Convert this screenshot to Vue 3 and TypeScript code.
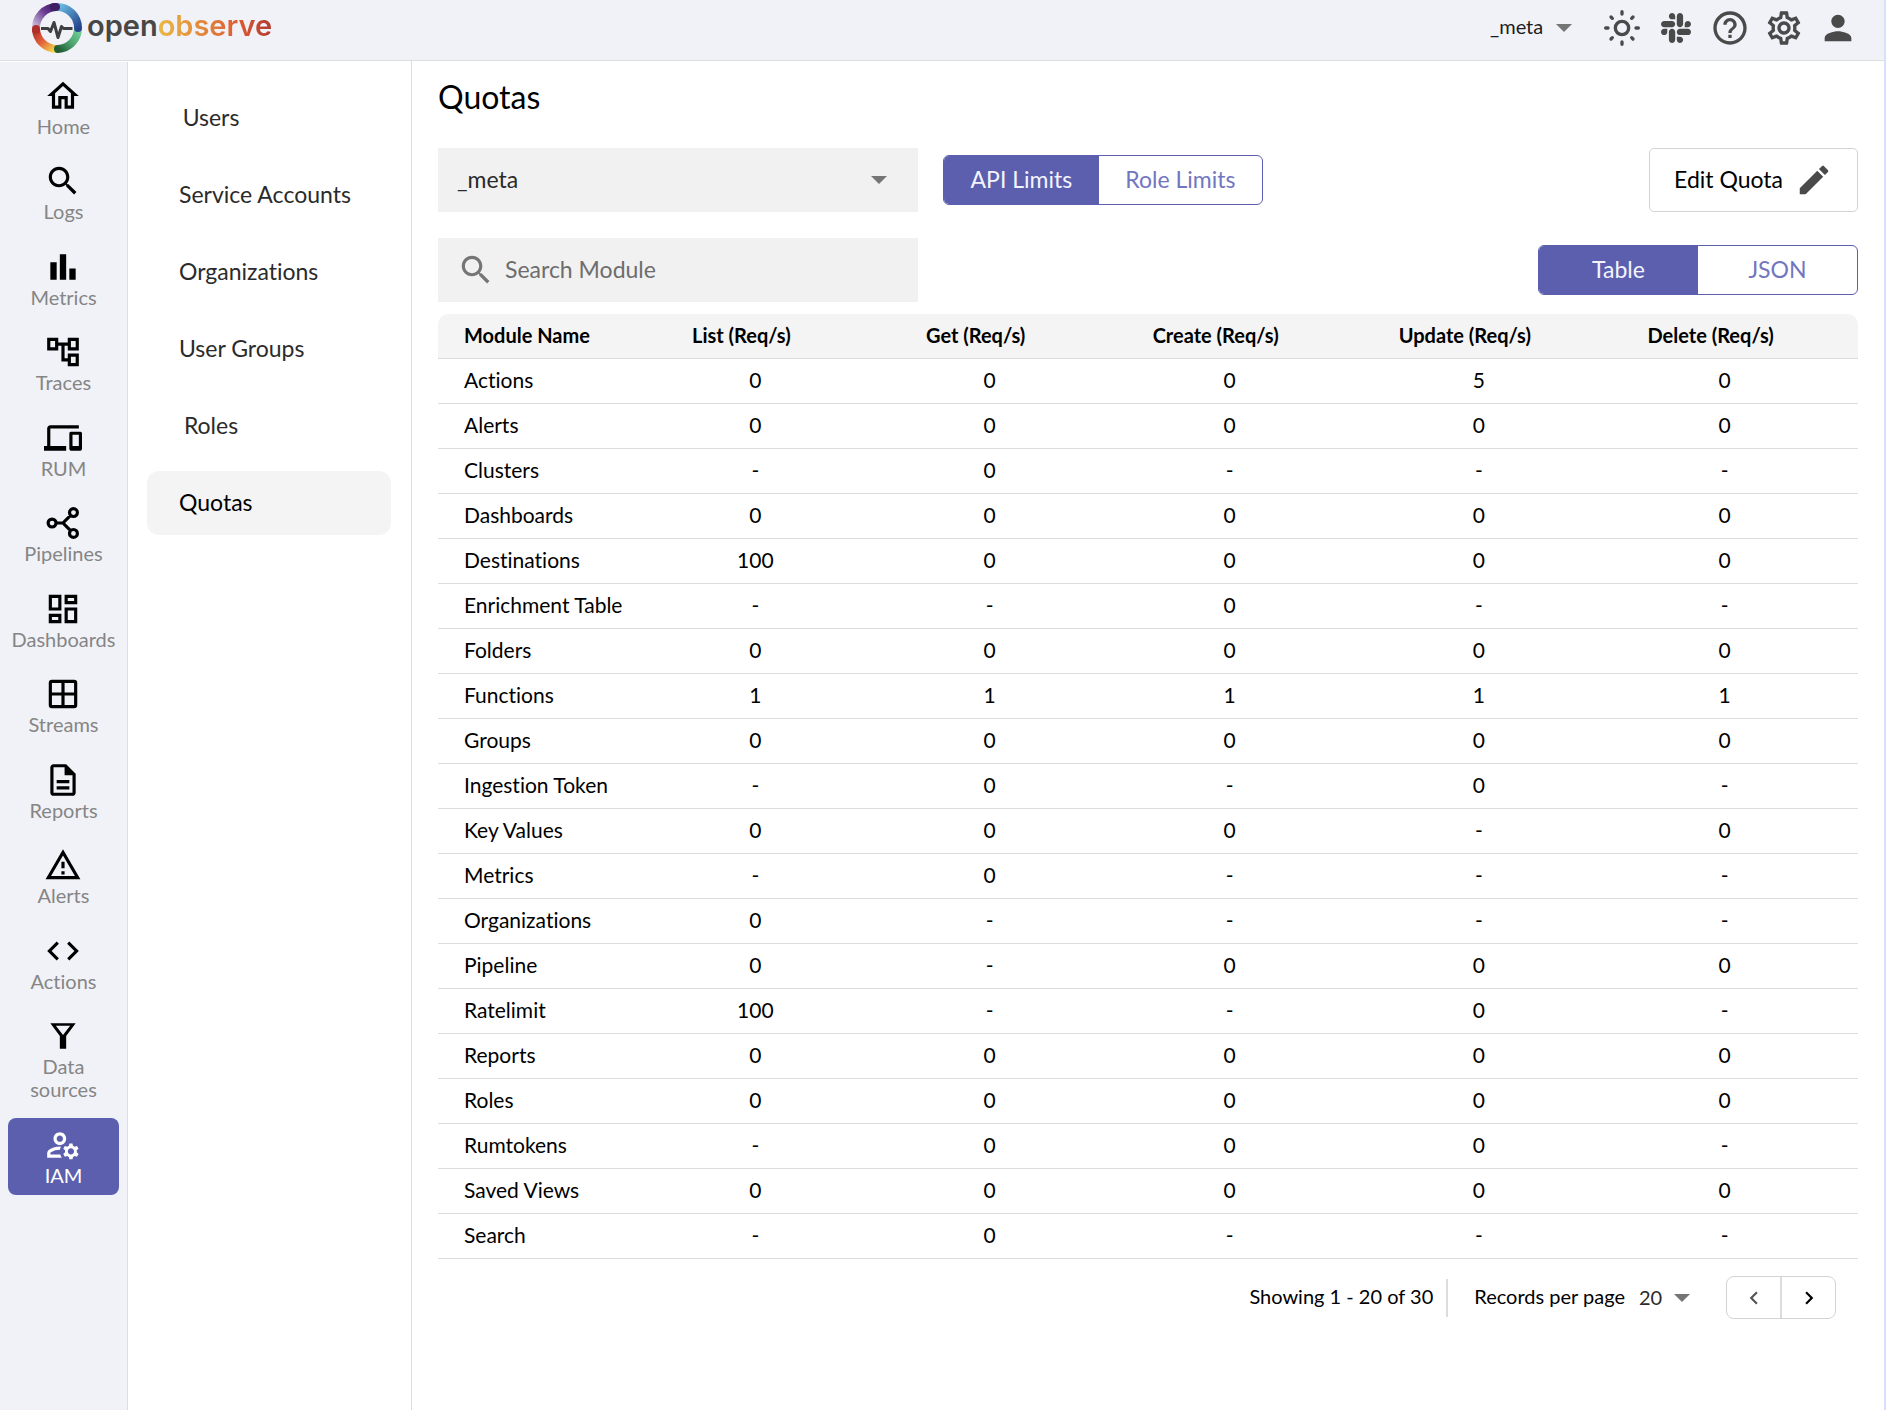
<script setup lang="ts">
import { ref } from 'vue'

interface RailItem {
  label: string
  paths: string
  stroked?: boolean
}

const rail: RailItem[] = [
  { label: 'Home', paths: 'M12 5.69l5 4.5V18h-2v-6H9v6H7v-7.81l5-4.5M12 3L2 12h3v8h6v-6h2v6h6v-8h3L12 3z' },
  { label: 'Logs', paths: 'M15.5 14h-.79l-.28-.27C15.41 12.59 16 11.11 16 9.5 16 5.91 13.09 3 9.5 3S3 5.91 3 9.5 5.91 16 9.5 16c1.61 0 3.09-.59 4.23-1.57l.27.28v.79l5 4.99L20.49 19l-4.99-5zm-6 0C7.01 14 5 11.99 5 9.5S7.01 5 9.5 5 14 7.01 14 9.5 11.99 14 9.5 14z' },
  { label: 'Metrics', paths: 'M4 9h4v11H4zm12 4h4v7h-4zm-6-9h4v16h-4z' },
  { label: 'Traces', paths: 'M22 11V3h-7v3H9V3H2v8h7V8h2v10h4v3h7v-8h-7v3h-2V8h2v3h7zM7 9H4V5h3v4zm10 6h3v4h-3v-4zm0-10h3v4h-3V5z' },
  { label: 'RUM', paths: 'M4 6h18V4H4c-1.1 0-2 .9-2 2v11H0v3h14v-3H4V6zm19 2h-6c-.55 0-1 .45-1 1v10c0 .55.45 1 1 1h6c.55 0 1-.45 1-1V9c0-.55-.45-1-1-1zm-1 9h-4v-7h4v7z' },
  { label: 'Pipelines', stroked: true, paths: 'M7.6 12a2.5 2.5 0 1 1-5 0a2.5 2.5 0 1 1 5 0M21.1 5.4a2.5 2.5 0 1 1-5 0a2.5 2.5 0 1 1 5 0M21.1 18.6a2.5 2.5 0 1 1-5 0a2.5 2.5 0 1 1 5 0M8 12h4M16.8 7.2L12 12l4.8 4.8' },
  { label: 'Dashboards', paths: 'M19 5v2h-4V5h4M9 5v6H5V5h4m10 8v6h-4v-6h4M9 17v2H5v-2h4M21 3h-8v6h8V3zM11 3H3v10h8V3zm10 8h-8v10h8V11zm-10 4H3v6h8v-6z' },
  { label: 'Streams', stroked: true, paths: 'M5 4h14a1 1 0 0 1 1 1v14a1 1 0 0 1-1 1H5a1 1 0 0 1-1-1V5a1 1 0 0 1 1-1zM12 4v16M4 12h16' },
  { label: 'Reports', paths: 'M8 16h8v2H8zm0-4h8v2H8zm6-10H6c-1.1 0-2 .9-2 2v16c0 1.1.89 2 1.99 2H18c1.1 0 2-.9 2-2V8l-6-6zm4 18H6V4h7v5h5v11z' },
  { label: 'Alerts', paths: 'M12 5.99L19.53 19H4.47L12 5.99M12 2L1 21h22L12 2zm1 14h-2v2h2v-2zm0-6h-2v4h2v-4z' },
  { label: 'Actions', paths: 'M9.4 16.6L4.8 12l4.6-4.6L8 6l-6 6 6 6 1.4-1.4zm5.2 0l4.6-4.6-4.6-4.6L16 6l6 6-6 6-1.4-1.4z' },
  { label: 'Data sources', paths: 'M7.5 5.6h9L12 11.3 7.5 5.6zM4 4l6 8v8h4v-8l6-8H4z' },
  { label: 'IAM', paths: 'M4 18v-.65c0-.34.16-.66.41-.81C6.1 15.53 8.03 15 10 15c.03 0 .05 0 .08.01.1-.7.3-1.37.59-1.98-.22-.02-.44-.03-.67-.03-2.42 0-4.68.67-6.61 1.82-.88.52-1.39 1.5-1.39 2.53V20h9.26c-.42-.6-.75-1.28-.97-2H4zM10 12c2.21 0 4-1.79 4-4s-1.79-4-4-4-4 1.79-4 4 1.79 4 4 4zm0-6c1.1 0 2 .9 2 2s-.9 2-2 2-2-.9-2-2 .9-2 2-2zM20.75 16c0-.22-.03-.42-.06-.63l1.14-1.01-1-1.73-1.45.49c-.32-.27-.68-.48-1.08-.63L18 11h-2l-.3 1.49c-.4.15-.76.36-1.08.63l-1.45-.49-1 1.73 1.14 1.01c-.03.21-.06.41-.06.63s.03.42.06.63l-1.14 1.01 1 1.73 1.45-.49c.32.27.68.48 1.08.63L16 21h2l.3-1.49c.4-.15.76-.36 1.08-.63l1.45.49 1-1.73-1.14-1.01c.03-.21.06-.41.06-.63zM17 18c-1.1 0-2-.9-2-2s.9-2 2-2 2 .9 2 2-.9 2-2 2z' },
]
const activeRail = 'IAM'

const sections = ['Users', 'Service Accounts', 'Organizations', 'User Groups', 'Roles', 'Quotas']
const activeSection = 'Quotas'

const columns = ['List', 'Get', 'Create', 'Update', 'Delete']

const modules: [string, string][] = [
  ['Actions', '0 0 0 5 0'],
  ['Alerts', '0 0 0 0 0'],
  ['Clusters', '- 0 - - -'],
  ['Dashboards', '0 0 0 0 0'],
  ['Destinations', '100 0 0 0 0'],
  ['Enrichment Table', '- - 0 - -'],
  ['Folders', '0 0 0 0 0'],
  ['Functions', '1 1 1 1 1'],
  ['Groups', '0 0 0 0 0'],
  ['Ingestion Token', '- 0 - 0 -'],
  ['Key Values', '0 0 0 - 0'],
  ['Metrics', '- 0 - - -'],
  ['Organizations', '0 - - - -'],
  ['Pipeline', '0 - 0 0 0'],
  ['Ratelimit', '100 - - 0 -'],
  ['Reports', '0 0 0 0 0'],
  ['Roles', '0 0 0 0 0'],
  ['Rumtokens', '- 0 0 0 -'],
  ['Saved Views', '0 0 0 0 0'],
  ['Search', '- 0 - - -'],
]

const limitTab = ref('API Limits')
const viewTab = ref('Table')
const search = ref('')
</script>

<template>
  <div class="app">
    <header class="topbar">
      <a class="brand" href="#" aria-label="openobserve">
        <svg class="brand-mark" viewBox="0 0 50 50" aria-hidden="true">
          <defs>
            <linearGradient id="lgPurple" x1="0" y1="1" x2="1" y2="0">
              <stop offset="0" stop-color="#c9bcdb" /><stop offset=".6" stop-color="#6a3a92" /><stop offset="1" stop-color="#3f1f63" />
            </linearGradient>
            <linearGradient id="lgBlue" x1="0" y1="0" x2="1" y2="1">
              <stop offset="0" stop-color="#6cc0e4" /><stop offset="1" stop-color="#27458f" />
            </linearGradient>
            <linearGradient id="lgGreen" x1="1" y1="0" x2="0" y2="1">
              <stop offset="0" stop-color="#74cf97" /><stop offset=".5" stop-color="#4fa772" /><stop offset="1" stop-color="#235c35" />
            </linearGradient>
            <linearGradient id="lgRed" x1="0" y1="0" x2="1" y2="1">
              <stop offset="0" stop-color="#b02f2b" /><stop offset=".45" stop-color="#e2603a" /><stop offset="1" stop-color="#f3dc4a" />
            </linearGradient>
          </defs>
          <g fill="none" stroke-width="8">
            <path d="M4 26A21 21 0 0 0 25 46" stroke="url(#lgRed)" />
            <path d="M46 25A21 21 0 0 1 26 46" stroke="url(#lgGreen)" stroke-linecap="round" />
            <path d="M25 4A21 21 0 0 1 46 25" stroke="url(#lgBlue)" stroke-linecap="round" />
            <path d="M4 25A21 21 0 0 1 24 4" stroke="url(#lgPurple)" />
            <path d="M22 4L24 4" stroke="#3f1f63" stroke-linecap="round" />
            <path d="M4 27L4 26" stroke="#b02f2b" stroke-linecap="round" />
          </g>
          <path d="M9 25.500h7l2.500 3 3.500-9 4 15 3.500-11 2 2h9" fill="none" stroke="#3f3f42" stroke-width="3" stroke-linejoin="round" />
        </svg>
        <span class="brand-name">open<span class="brand-tail">observe</span></span>
      </a>
      <div class="topbar-tools">
        <label class="pick org-pick">
          <select aria-label="Organization"><option>_meta</option></select>
          <svg class="caret" viewBox="0 0 16 8" aria-hidden="true"><path d="M0 0h16L8 8z" /></svg>
        </label>
        <button type="button" class="tool" aria-label="Theme">
          <svg viewBox="0 0 24 24"><g fill="none" stroke="currentColor" stroke-width="2"><circle cx="12" cy="12" r="4" /><path stroke-linecap="round" d="M12 2.200v1.400M12 20.400v1.400M2.200 12h1.400M20.400 12h1.400M5.400 5.400l.8.8M17.800 17.800l.8.8M5.400 18.600l.8-.8M17.800 6.200l.8-.8" /></g></svg>
        </button>
        <button type="button" class="tool tool-slack" aria-label="Slack">
          <svg viewBox="0 32 448 448"><path d="M94.12 315.1c0 25.9-21.16 47.06-47.06 47.06S0 341 0 315.1c0-25.9 21.16-47.06 47.06-47.06h47.06v47.06zm23.72 0c0-25.9 21.16-47.06 47.06-47.06s47.06 21.16 47.06 47.06v117.84c0 25.9-21.16 47.06-47.06 47.06s-47.06-21.16-47.06-47.06V315.1zm47.06-188.98c-25.9 0-47.06-21.16-47.06-47.06S139 32 164.9 32s47.06 21.16 47.06 47.06v47.06H164.9zm0 23.72c25.9 0 47.06 21.16 47.06 47.06s-21.16 47.06-47.06 47.06H47.06C21.16 243.96 0 222.8 0 196.9s21.16-47.06 47.06-47.06H164.9zm188.98 47.06c0-25.9 21.16-47.06 47.06-47.06 25.9 0 47.06 21.16 47.06 47.06s-21.16 47.06-47.06 47.06h-47.06V196.9zm-23.72 0c0 25.9-21.16 47.06-47.06 47.06-25.9 0-47.06-21.16-47.06-47.06V79.06c0-25.9 21.16-47.06 47.06-47.06 25.9 0 47.06 21.16 47.06 47.06V196.9zM283.1 385.88c25.9 0 47.06 21.16 47.06 47.06 0 25.9-21.16 47.06-47.06 47.06-25.9 0-47.06-21.16-47.06-47.06v-47.06h47.06zm0-23.72c-25.9 0-47.06-21.16-47.06-47.06 0-25.9 21.16-47.06 47.06-47.06h117.84c25.9 0 47.06 21.16 47.06 47.06 0 25.9-21.16 47.06-47.06 47.06H283.1z" /></svg>
        </button>
        <button type="button" class="tool" aria-label="Help">
          <svg viewBox="0 0 24 24"><path d="M11 18h2v-2h-2v2zm1-16C6.480 2 2 6.480 2 12s4.480 10 10 10 10-4.480 10-10S17.520 2 12 2zm0 18c-4.410 0-8-3.590-8-8s3.590-8 8-8 8 3.590 8 8-3.590 8-8 8zm0-14c-2.210 0-4 1.790-4 4h2c0-1.100.9-2 2-2s2 .9 2 2c0 2-3 1.750-3 5h2c0-2.250 3-2.500 3-5 0-2.210-1.790-4-4-4z" /></svg>
        </button>
        <button type="button" class="tool" aria-label="Settings">
          <svg viewBox="0 0 24 24"><path d="M19.43 12.98c.04-.32.07-.64.07-.98 0-.34-.03-.66-.07-.98l2.11-1.65c.19-.15.24-.42.12-.64l-2-3.46c-.09-.16-.26-.25-.44-.25-.06 0-.12.01-.17.03l-2.490 1c-.52-.4-1.080-.73-1.690-.98l-.38-2.650C14.460 2.180 14.250 2 14 2h-4c-.25 0-.46.18-.49.42l-.38 2.650c-.61.25-1.170.59-1.690.98l-2.490-1c-.06-.02-.12-.03-.18-.03-.17 0-.34.09-.43.25l-2 3.460c-.13.22-.07.49.12.64l2.110 1.650c-.04.32-.07.65-.07.98 0 .33.03.66.07.98l-2.110 1.650c-.19.15-.24.42-.12.64l2 3.460c.09.16.26.25.44.25.06 0 .12-.01.17-.03l2.490-1c.52.4 1.080.73 1.690.98l.38 2.650c.03.24.24.42.49.42h4c.25 0 .46-.18.49-.42l.38-2.650c.61-.25 1.170-.59 1.690-.98l2.490 1c.06.02.12.03.18.03.17 0 .34-.09.43-.25l2-3.460c.12-.22.07-.49-.12-.64l-2.110-1.650zm-1.980-1.710c.04.31.05.52.05.73 0 .21-.02.43-.05.73l-.14 1.130.89.7 1.080.84-.7 1.210-1.270-.51-1.040-.42-.9.68c-.43.32-.84.56-1.250.73l-1.060.43-.16 1.130-.2 1.350h-1.400l-.19-1.350-.16-1.130-1.060-.43c-.43-.18-.83-.41-1.230-.71l-.91-.7-1.060.43-1.270.51-.7-1.210 1.080-.84.89-.7-.14-1.130c-.03-.31-.05-.54-.05-.74s.02-.43.05-.73l.14-1.130-.89-.7-1.080-.84.7-1.210 1.270.51 1.040.42.9-.68c.43-.32.84-.56 1.250-.73l1.060-.43.16-1.130.2-1.350h1.390l.19 1.350.16 1.130 1.060.43c.43.18.83.41 1.230.71l.91.7 1.060-.43 1.270-.51.7 1.210-1.070.85-.89.7.14 1.130zM12 8c-2.210 0-4 1.790-4 4s1.790 4 4 4 4-1.790 4-4-1.790-4-4-4zm0 6c-1.100 0-2-.9-2-2s.9-2 2-2 2 .9 2 2-.9 2-2 2z" /></svg>
        </button>
        <button type="button" class="tool" aria-label="Account">
          <svg viewBox="0 0 24 24"><path d="M12 12c2.210 0 4-1.790 4-4s-1.790-4-4-4-4 1.790-4 4 1.790 4 4 4zm0 2c-2.670 0-8 1.340-8 4v2h16v-2c0-2.660-5.330-4-8-4z" /></svg>
        </button>
      </div>
    </header>

    <div class="body">
      <nav class="rail" aria-label="Main">
        <a
          v-for="item in rail"
          :key="item.label"
          href="#"
          class="rail-item"
          :class="{ active: item.label === activeRail }"
        >
          <svg viewBox="0 0 24 24" :class="{ stroked: item.stroked }" aria-hidden="true"><path :d="item.paths" fill-rule="evenodd" /></svg>
          <span>{{ item.label }}</span>
        </a>
      </nav>

      <nav class="sections" aria-label="Identity and access">
        <a v-for="name in sections" :key="name" href="#" :class="{ active: name === activeSection }"><span>{{ name }}</span></a>
      </nav>

      <main class="content">
        <h1>Quotas</h1>

        <div class="row">
          <label class="pick field">
            <select aria-label="Quota organization"><option>_meta</option></select>
            <svg class="caret" viewBox="0 0 16 8" aria-hidden="true"><path d="M0 0h16L8 8z" /></svg>
          </label>
          <div class="toggle toggle-limits">
            <button
              v-for="tab in ['API Limits', 'Role Limits']"
              :key="tab"
              type="button"
              :class="{ on: limitTab === tab }"
              @click="limitTab = tab"
            >{{ tab }}</button>
          </div>
          <button type="button" class="edit">
            <span>Edit Quota</span>
            <svg viewBox="0 0 24 24" aria-hidden="true"><path d="M3 17.250V21h3.750L17.810 9.940l-3.750-3.750L3 17.250zM20.710 7.040c.39-.39.39-1.020 0-1.410l-2.340-2.340c-.39-.39-1.020-.39-1.410 0l-1.830 1.830 3.750 3.750 1.830-1.830z" /></svg>
          </button>
        </div>

        <div class="row">
          <label class="field search">
            <svg viewBox="0 0 24 24" aria-hidden="true"><path :d="rail[1].paths" /></svg>
            <input v-model="search" type="text" placeholder="Search Module" aria-label="Search Module" />
          </label>
          <div class="toggle toggle-view">
            <button
              v-for="tab in ['Table', 'JSON']"
              :key="tab"
              type="button"
              :class="{ on: viewTab === tab }"
              @click="viewTab = tab"
            >{{ tab }}</button>
          </div>
        </div>

        <table>
          <colgroup>
            <col class="c-name" /><col class="c-narrow" /><col class="c-narrow" /><col class="c-mid" /><col class="c-wide" /><col class="c-last" />
          </colgroup>
          <thead>
            <tr>
              <th scope="col">Module Name</th>
              <th v-for="c in columns" :key="c" scope="col">{{ c }} (Req/s)</th>
            </tr>
          </thead>
          <tbody>
            <tr v-for="[name, limits] in modules" :key="name">
              <td>{{ name }}</td>
              <td v-for="(v, i) in limits.split(' ')" :key="i">{{ v }}</td>
            </tr>
          </tbody>
        </table>

        <footer class="pager">
          <span class="showing">Showing 1 - 20 of 30</span>
          <label for="per-page">Records per page</label>
          <span class="pick per-page">
            <select id="per-page"><option>20</option></select>
            <svg class="caret" viewBox="0 0 16 8" aria-hidden="true"><path d="M0 0h16L8 8z" /></svg>
          </span>
          <div class="steps">
            <button type="button" disabled aria-label="Previous page"><svg viewBox="0 0 24 24"><path d="M15.410 7.410L14 6l-6 6 6 6 1.410-1.410L10.830 12z" /></svg></button>
            <button type="button" aria-label="Next page"><svg viewBox="0 0 24 24"><path d="M10 6L8.590 7.410 13.170 12l-4.580 4.590L10 18l6-6z" /></svg></button>
          </div>
        </footer>
      </main>
    </div>
  </div>
</template>

<style>
body {
  margin: 0;
  background: #fff;
}
</style>

<style scoped>
.app {
  --accent: #5b5fae;
  --line: #dcdee2;
  --panel: #f1f2f8;
  display: flex;
  flex-direction: column;
  min-height: 100vh;
  box-sizing: border-box;
  border-right: 2px solid #d6e0fa;
  font-family: "Lato", "Open Sans", sans-serif;
  font-size: 23px;
  font-variant-ligatures: none;
  color: #000;
}
.app *,
.app *::before {
  box-sizing: border-box;
}
a {
  color: inherit;
  text-decoration: none;
}
button,
input,
select {
  font: inherit;
  font-variant-ligatures: none;
  color: inherit;
  border: 0;
  margin: 0;
  padding: 0;
  background: none;
}
svg {
  display: block;
  flex: none;
  fill: currentColor;
}

.topbar {
  display: flex;
  align-items: center;
  justify-content: space-between;
  height: 61px;
  padding: 0 26px 5px 32px;
  background: var(--panel);
  border-bottom: 1px solid var(--line);
}
.brand {
  display: flex;
  align-items: center;
  gap: 5px;
}
.brand-mark {
  width: 50px;
  height: 50px;
}
.brand-name {
  padding-bottom: 4px;
  font-family: "Inter", sans-serif;
  font-size: 29px;
  font-weight: 600;
  line-height: 40px;
  color: #474747;
}
.brand-tail {
  color: transparent;
  background: linear-gradient(90deg, #ebb844, #e0803a 45%, #dd5c35 70%, #b03a30);
  background-clip: text;
}
.topbar-tools {
  display: flex;
  align-items: center;
  gap: 14px;
  color: #4a4a4a;
}
.tool {
  display: grid;
  place-items: center;
  width: 40px;
  height: 40px;
}
.tool svg {
  width: 40px;
  height: 40px;
}
.tool-slack svg {
  width: 30px;
  height: 30px;
}

.pick {
  position: relative;
  display: block;
}
.pick select {
  width: 100%;
  height: 100%;
  padding-bottom: 2px;
  appearance: none;
  outline: none;
}
.caret {
  position: absolute;
  top: 50%;
  right: 0;
  width: 16px;
  height: 8px;
  margin-top: -4px;
  color: #757575;
  pointer-events: none;
}
.org-pick {
  width: 82px;
  height: 40px;
  margin-right: 16px;
  padding-bottom: 2px;
  font-size: 20px;
  color: #1d1d1d;
}

.body {
  display: flex;
  flex: 1;
}
.rail {
  flex: none;
  width: 128px;
  margin-top: 1px;
  padding: 7px 8px;
  background: var(--panel);
  border-right: 1px solid var(--line);
}
.rail-item {
  display: flex;
  flex-direction: column;
  align-items: center;
  min-height: 77px;
  margin-bottom: 8px;
  padding: 8px 0;
  border-radius: 8px;
  font-size: 20px;
  line-height: 23px;
  text-align: center;
  color: #000;
}
.rail-item:nth-child(even) {
  margin-bottom: 9px;
}
.rail-item svg {
  width: 38px;
  height: 38px;
  margin-right: 1px;
}
.rail-item svg.stroked {
  fill: none;
  stroke: currentColor;
  stroke-width: 2px;
}
.rail-item span {
  color: #858585;
}
.rail-item.active,
.rail-item.active span {
  color: #fff;
}
.rail-item.active {
  background: var(--accent);
}

.sections {
  display: flex;
  flex-direction: column;
  flex: none;
  gap: 13px;
  width: 284px;
  padding: 25px 20px 0 19px;
  border-right: 1px solid var(--line);
}
.sections a {
  padding: 0 32px 2px;
  border-radius: 12px;
  line-height: 62px;
  color: #2b2b2b;
}
.sections span {
  display: inline-block;
  min-width: 64px;
  text-align: center;
}
.sections a.active {
  background: #f4f4f4;
  color: #000;
}

.content {
  flex: 1;
  min-width: 0;
  padding: 16px 26px 0;
}
h1 {
  margin: 0 0 31px;
  font-size: 32px;
  font-weight: 400;
  line-height: 40px;
}
.row {
  display: flex;
  align-items: center;
  margin-bottom: 26px;
}
.row + .row {
  margin-bottom: 12px;
}
.field {
  width: 480px;
  height: 64px;
  background: #f1f1f1;
  color: #2b2b2b;
}
.field select {
  padding: 0 19px 3px;
}
.field .caret {
  right: 31px;
}
.search {
  display: flex;
  align-items: center;
  gap: 10px;
  padding: 0 19px;
}
.search svg {
  width: 38px;
  height: 38px;
  color: #757575;
}
.search input {
  flex: 1;
  min-width: 0;
  padding-bottom: 3px;
  outline: none;
}
.search input::placeholder {
  color: #6d6d6d;
  opacity: 1;
}
.toggle {
  display: flex;
  width: 320px;
  height: 50px;
  overflow: hidden;
  border: 1px solid var(--accent);
  border-radius: 6px;
}
.toggle button {
  flex: 1 1 auto;
  padding-bottom: 3px;
  color: #7276bf;
}
.toggle button.on {
  background: var(--accent);
  color: #f4f4ff;
}
.toggle-limits {
  margin-left: 25px;
}
.toggle-view {
  margin-left: auto;
}
.toggle-view button {
  flex: 1 1 0;
}
.edit {
  display: flex;
  align-items: center;
  gap: 12px;
  height: 64px;
  margin-left: auto;
  padding: 0 24px;
  border: 1px solid #d4d4d4;
  border-radius: 5px;
}
.edit span {
  padding-bottom: 3px;
}
.edit svg {
  width: 38px;
  height: 38px;
  color: #4a4a4a;
}

table {
  width: 100%;
  table-layout: fixed;
  border-collapse: separate;
  border-spacing: 0;
  font-size: 21px;
  line-height: 24px;
}
.c-name {
  width: 14.1%;
}
.c-narrow {
  width: 16.5%;
}
.c-mid {
  width: 17.3%;
}
.c-wide {
  width: 17.8%;
}
th,
td {
  height: 45px;
  padding: 0 0 2px;
  border-bottom: 1px solid #dcdcdc;
  text-align: center;
  white-space: nowrap;
}
th {
  padding-right: 28px;
  background: #f4f4f4;
  font-size: 20px;
  font-weight: 700;
}
th:first-child,
td:first-child {
  padding: 0 0 2px 26px;
  text-align: left;
}
td:last-child {
  padding-right: 14px;
}
th:last-child {
  padding-right: 42px;
  border-top-right-radius: 10px;
}
th:first-child {
  border-top-left-radius: 10px;
}

.pager {
  display: flex;
  align-items: center;
  justify-content: flex-end;
  padding: 17px 22px 0 0;
  font-size: 20px;
}
.showing {
  margin-right: 26px;
  padding: 0 13px 3px 0;
  border-right: 2px solid #dcdcdc;
  line-height: 35px;
}
.pager label {
  padding-bottom: 3px;
}
.per-page {
  width: 51px;
  height: 38px;
  margin: 0 36px 0 14px;
  color: #2b2b2b;
}
.steps {
  display: flex;
  width: 110px;
  height: 43px;
  border: 1px solid #d4d4d4;
  border-radius: 8px;
}
.steps button {
  display: grid;
  flex: 1;
  place-items: center;
}
.steps button + button {
  border-left: 2px solid #dcdcdc;
}
.steps button:disabled {
  color: #555;
}
.steps svg {
  width: 26px;
  height: 26px;
}
</style>
